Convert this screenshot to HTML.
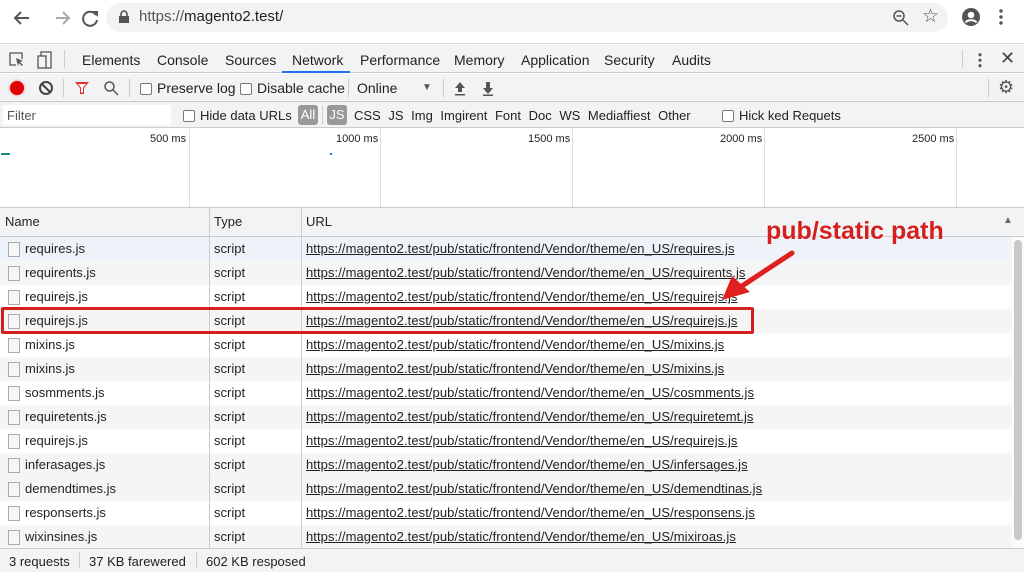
<!DOCTYPE html>
<html><head><meta charset="utf-8"><style>
*{box-sizing:border-box;margin:0;padding:0}
body{width:1024px;height:572px;overflow:hidden;background:#fff;font-family:"Liberation Sans",Arial,sans-serif;font-size:13px;color:#222;position:relative}
.a{position:absolute;white-space:nowrap}
.cb{display:inline-block;width:12px;height:12px;border:1px solid #777;border-radius:2px;background:#fff;vertical-align:-2px;margin-right:5px}
.row{position:absolute;left:0;width:1012px;height:24px}
.row span{position:absolute;top:4px}
.fi{position:absolute;left:8px;top:5px;width:12px;height:15px;border:1px solid #aaa;background:#f7f7f7}
u{text-decoration:underline;letter-spacing:0.07px}
</style></head><body>
<div class="a" style="left:0;top:0;width:1024px;height:44px;background:#fff;border-bottom:1px solid #ddd"></div>
<svg class="a" style="left:10px;top:8px" width="90" height="20" viewBox="0 0 90 20">
<path d="M19 10H6M11 4L5 10l6 6" stroke="#555" stroke-width="2" fill="none"/>
<path d="M46 10h13M53 4l6 6-6 6" stroke="#aaa" stroke-width="2" fill="none"/>
<path d="M86 7a7 7 0 1 0 1 5" stroke="#555" stroke-width="2" fill="none"/><path d="M82 3h6v6z" fill="#555"/>
</svg>
<div class="a" style="left:106px;top:3px;width:842px;height:29px;border-radius:15px;background:#f1f3f4"></div>
<svg class="a" style="left:118px;top:10px" width="12" height="14"><rect x="1" y="6" width="10" height="7" fill="#555"/><path d="M3 6V4a3 3 0 0 1 6 0v2" stroke="#555" stroke-width="1.6" fill="none"/></svg>
<div class="a" style="left:139px;top:8px;font-size:15px;color:#555">https://<span style="color:#222">magento2.test/</span></div>
<svg class="a" style="left:892px;top:9px" width="18" height="18"><circle cx="7" cy="7" r="5" stroke="#555" stroke-width="1.5" fill="none"/><path d="M11 11l5 5M4.5 7h5" stroke="#555" stroke-width="1.5"/></svg>
<div class="a" style="left:922px;top:5px;font-size:19px;color:#555">☆</div>
<svg class="a" style="left:961px;top:7px" width="20" height="20"><circle cx="10" cy="10" r="9" fill="#555"/><circle cx="10" cy="8" r="3.3" fill="#fff"/><path d="M4.5 15.5c2-3 9-3 11 0" stroke="#fff" stroke-width="2" fill="none"/></svg>
<div class="a" style="left:999px;top:8px;width:4px;height:18px;background:radial-gradient(circle,#555 1.5px,transparent 2px) 0 0/4px 6px"></div>
<div class="a" style="left:0;top:45px;width:1024px;height:28px;background:#f1f3f4;border-bottom:1px solid #ccc"></div>
<svg class="a" style="left:8px;top:51px" width="46" height="18"><path d="M8 14H2V2h12v6" stroke="#555" stroke-width="1.3" fill="none"/><path d="M8 7l7 3-3 1 3 3-1 1-3-3-1 3z" fill="#555"/><rect x="30" y="5" width="8" height="12" stroke="#555" stroke-width="1.3" fill="none"/><path d="M33 5V1h10v16h-5" stroke="#555" stroke-width="1.3" fill="none"/></svg>
<div class="a" style="left:64px;top:50px;width:1px;height:18px;background:#ccc"></div>
<div class="a" style="top:52px;left:82px;font-size:14px">Elements</div>
<div class="a" style="top:52px;left:157px;font-size:14px">Console</div>
<div class="a" style="top:52px;left:225px;font-size:14px">Sources</div>
<div class="a" style="top:52px;left:292px;font-size:14px">Network</div>
<div class="a" style="left:282px;top:71px;width:68px;height:2px;background:#1a73e8"></div>
<div class="a" style="top:52px;left:360px;font-size:14px">Performance</div>
<div class="a" style="top:52px;left:454px;font-size:14px">Memory</div>
<div class="a" style="top:52px;left:521px;font-size:14px">Application</div>
<div class="a" style="top:52px;left:604px;font-size:14px">Security</div>
<div class="a" style="top:52px;left:672px;font-size:14px">Audits</div>
<div class="a" style="left:962px;top:50px;width:1px;height:18px;background:#ccc"></div>
<div class="a" style="left:978px;top:52px;width:4px;height:16px;background:radial-gradient(circle,#555 1.4px,transparent 1.8px) 0 0/4px 5.5px"></div>
<div class="a" style="left:1000px;top:48px;font-size:18px;color:#444">✕</div>
<div class="a" style="left:0;top:74px;width:1024px;height:28px;background:#f1f3f4;border-bottom:1px solid #ccc"></div>
<div class="a" style="left:10px;top:81px;width:14px;height:14px;border-radius:50%;background:#d00;box-shadow:0 0 3px #f88"></div>
<svg class="a" style="left:38px;top:80px" width="16" height="16"><circle cx="8" cy="8" r="6" stroke="#444" stroke-width="2" fill="none"/><path d="M4 4l8 8" stroke="#444" stroke-width="2"/></svg>
<div class="a" style="left:63px;top:79px;width:1px;height:18px;background:#ccc"></div>
<svg class="a" style="left:74px;top:81px" width="16" height="14"><path d="M1 1h14L10 7v6H6V7z" fill="#d33"/><path d="M4 3h8L9 6.5v5H7v-5z" fill="#fff"/></svg>
<svg class="a" style="left:103px;top:80px" width="16" height="16"><circle cx="6.5" cy="6.5" r="4.5" stroke="#555" stroke-width="1.5" fill="none"/><path d="M10 10l5 5" stroke="#555" stroke-width="1.5"/></svg>
<div class="a" style="left:129px;top:79px;width:1px;height:18px;background:#ccc"></div>
<div class="a" style="left:140px;top:80px;font-size:14px"><span class="cb"></span>Preserve log</div>
<div class="a" style="left:240px;top:80px;font-size:14px"><span class="cb"></span>Disable cache</div>
<div class="a" style="left:348px;top:79px;width:1px;height:18px;background:#ccc"></div>
<div class="a" style="left:357px;top:80px;font-size:14px">Online</div>
<div class="a" style="left:422px;top:82px;font-size:10px;color:#555">▼</div>
<div class="a" style="left:443px;top:79px;width:1px;height:18px;background:#ccc"></div>
<svg class="a" style="left:453px;top:80px" width="46" height="16"><path d="M7 2l5 6H9v4H5V8H2z M2 14h10v1.5H2z" fill="#555"/><path d="M35 14l5-6h-3V2h-4v6h-3z M30 14.5h10V16H30z" fill="#555"/></svg>
<div class="a" style="left:988px;top:79px;width:1px;height:18px;background:#ccc"></div>
<div class="a" style="left:998px;top:77px;font-size:18px;color:#555">⚙</div>
<div class="a" style="left:0;top:102px;width:1024px;height:26px;background:#f1f3f4;border-bottom:1px solid #ccc"></div>
<div class="a" style="left:3px;top:105px;width:168px;height:20px;background:#fff;padding:3px 4px;font-size:13px;color:#555">Filter</div>
<div class="a" style="left:183px;top:108px;font-size:13px"><span class="cb"></span>Hide data URLs</div>
<div class="a" style="left:298px;top:105px;width:20px;height:20px;border-radius:3px;background:#999;color:#fff;font-size:13px;text-align:center;line-height:20px">All</div>
<div class="a" style="left:322px;top:106px;width:1px;height:18px;background:#ccc"></div>
<div class="a" style="left:327px;top:105px;width:20px;height:20px;border-radius:3px;background:#999;color:#fff;font-size:13px;text-align:center;line-height:20px">JS</div>
<div class="a" style="left:354px;top:108px;font-size:13px;word-spacing:4px">CSS JS Img Imgirent Font Doc WS Mediaffiest Other</div>
<div class="a" style="left:722px;top:108px;font-size:13px"><span class="cb"></span>Hick ked Requets</div>
<div class="a" style="left:189px;top:129px;width:1px;height:78px;background:#ddd"></div>
<div class="a" style="left:380px;top:129px;width:1px;height:78px;background:#ddd"></div>
<div class="a" style="left:572px;top:129px;width:1px;height:78px;background:#ddd"></div>
<div class="a" style="left:764px;top:129px;width:1px;height:78px;background:#ddd"></div>
<div class="a" style="left:956px;top:129px;width:1px;height:78px;background:#ddd"></div>
<div class="a" style="left:150px;top:133px;font-size:11px">500 ms</div>
<div class="a" style="left:336px;top:133px;font-size:11px">1000 ms</div>
<div class="a" style="left:528px;top:133px;font-size:11px">1500 ms</div>
<div class="a" style="left:720px;top:133px;font-size:11px">2000 ms</div>
<div class="a" style="left:912px;top:133px;font-size:11px">2500 ms</div>
<div class="a" style="left:1px;top:153px;width:9px;height:2px;background:#1a8a7a"></div>
<div class="a" style="left:330px;top:153px;width:2px;height:2px;background:#1a73e8"></div>
<div class="a" style="left:0;top:207px;width:1024px;height:30px;background:#f1f3f4;border-top:1px solid #ccc;border-bottom:1px solid #ccc"></div>
<div class="a" style="left:5px;top:214px;font-size:13px">Name</div>
<div class="a" style="left:214px;top:214px;font-size:13px">Type</div>
<div class="a" style="left:306px;top:214px;font-size:13px">URL</div>
<div class="a" style="left:1003px;top:215px;font-size:10px;color:#666">▲</div>
<div class="row" style="top:237px;background:#eef3fa"><div class="fi"></div><span style="left:25px">requires.js</span><span style="left:214px">script</span><span style="left:306px"><u>https://magento2.test/pub/static/frontend/Vendor/theme/en_US/requires.js</u></span></div>
<div class="row" style="top:261px;background:#f5f5f5"><div class="fi"></div><span style="left:25px">requirents.js</span><span style="left:214px">script</span><span style="left:306px"><u>https://magento2.test/pub/static/frontend/Vendor/theme/en_US/requirents.js</u></span></div>
<div class="row" style="top:285px;background:#fff"><div class="fi"></div><span style="left:25px">requirejs.js</span><span style="left:214px">script</span><span style="left:306px"><u>https://magento2.test/pub/static/frontend/Vendor/theme/en_US/requirejs.js</u></span></div>
<div class="row" style="top:309px;background:#f5f5f5"><div class="fi"></div><span style="left:25px">requirejs.js</span><span style="left:214px">script</span><span style="left:306px"><u>https://magento2.test/pub/static/frontend/Vendor/theme/en_US/requirejs.js</u></span></div>
<div class="row" style="top:333px;background:#fff"><div class="fi"></div><span style="left:25px">mixins.js</span><span style="left:214px">script</span><span style="left:306px"><u>https://magento2.test/pub/static/frontend/Vendor/theme/en_US/mixins.js</u></span></div>
<div class="row" style="top:357px;background:#f5f5f5"><div class="fi"></div><span style="left:25px">mixins.js</span><span style="left:214px">script</span><span style="left:306px"><u>https://magento2.test/pub/static/frontend/Vendor/theme/en_US/mixins.js</u></span></div>
<div class="row" style="top:381px;background:#fff"><div class="fi"></div><span style="left:25px">sosmments.js</span><span style="left:214px">script</span><span style="left:306px"><u>https://magento2.test/pub/static/frontend/Vendor/theme/en_US/cosmments.js</u></span></div>
<div class="row" style="top:405px;background:#f5f5f5"><div class="fi"></div><span style="left:25px">requiretents.js</span><span style="left:214px">script</span><span style="left:306px"><u>https://magento2.test/pub/static/frontend/Vendor/theme/en_US/requiretemt.js</u></span></div>
<div class="row" style="top:429px;background:#fff"><div class="fi"></div><span style="left:25px">requirejs.js</span><span style="left:214px">script</span><span style="left:306px"><u>https://magento2.test/pub/static/frontend/Vendor/theme/en_US/requirejs.js</u></span></div>
<div class="row" style="top:453px;background:#f5f5f5"><div class="fi"></div><span style="left:25px">inferasages.js</span><span style="left:214px">script</span><span style="left:306px"><u>https://magento2.test/pub/static/frontend/Vendor/theme/en_US/infersages.js</u></span></div>
<div class="row" style="top:477px;background:#f5f5f5"><div class="fi"></div><span style="left:25px">demendtimes.js</span><span style="left:214px">script</span><span style="left:306px"><u>https://magento2.test/pub/static/frontend/Vendor/theme/en_US/demendtinas.js</u></span></div>
<div class="row" style="top:501px;background:#fff"><div class="fi"></div><span style="left:25px">responserts.js</span><span style="left:214px">script</span><span style="left:306px"><u>https://magento2.test/pub/static/frontend/Vendor/theme/en_US/responsens.js</u></span></div>
<div class="row" style="top:525px;background:#f5f5f5"><div class="fi"></div><span style="left:25px">wixinsines.js</span><span style="left:214px">script</span><span style="left:306px"><u>https://magento2.test/pub/static/frontend/Vendor/theme/en_US/mixiroas.js</u></span></div>
<div class="a" style="left:209px;top:208px;width:1px;height:340px;background:#ccc"></div>
<div class="a" style="left:301px;top:208px;width:1px;height:340px;background:#ccc"></div>
<div class="a" style="left:1012px;top:237px;width:12px;height:311px;background:#fafafa"></div>
<div class="a" style="left:1014px;top:240px;width:8px;height:300px;border-radius:4px;background:#c8c8c8"></div>
<div class="a" style="left:1px;top:307px;width:753px;height:27px;border:3px solid #d41f1f;border-radius:2px"></div>
<div class="a" style="left:766px;top:217px;font-size:25px;font-weight:bold;color:#d41f1f;text-shadow:0 0 2px #fff">pub/static path</div>
<svg class="a" style="left:718px;top:248px" width="80" height="58"><path d="M74 5L24 38" stroke="#e02020" stroke-width="5" stroke-linecap="round"/><path d="M4 52L14 28L32 44z" fill="#e02020"/></svg>
<div class="a" style="left:0;top:548px;width:1024px;height:24px;background:#f1f3f4;border-top:1px solid #ccc"></div>
<div class="a" style="left:9px;top:554px;font-size:13px">3 requests</div>
<div class="a" style="left:79px;top:552px;width:1px;height:16px;background:#ccc"></div>
<div class="a" style="left:89px;top:554px;font-size:13px">37 KB farewered</div>
<div class="a" style="left:196px;top:552px;width:1px;height:16px;background:#ccc"></div>
<div class="a" style="left:206px;top:554px;font-size:13px">602 KB resposed</div>
</body></html>
